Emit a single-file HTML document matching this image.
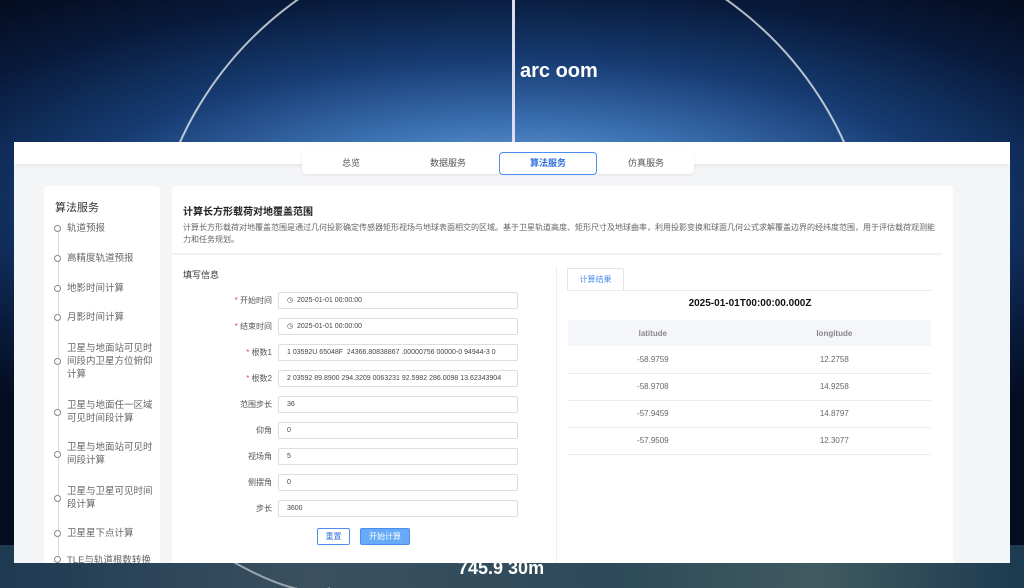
<!DOCTYPE html>
<html><head><meta charset="utf-8"><style>
*{margin:0;padding:0;box-sizing:border-box}
html,body{width:1024px;height:588px;overflow:hidden}
body{position:relative;font-family:"Liberation Sans","Noto Sans CJK SC",sans-serif;background:#0a1a3a}
.wrap{position:absolute;left:0;top:0;width:1024px;height:588px;overflow:hidden}
.bg{position:absolute;left:0;top:0;width:1024px;height:588px;background:radial-gradient(ellipse 800px 260px at 512px 200px,#7fb0e8 0%,#3a6fb0 30%,#163a70 55%,#081a3a 80%,#040c20 100%)}
.bg2{position:absolute;left:0;width:1024px;top:545px;height:43px;background:linear-gradient(90deg,#1e3a52,#3a5060 30%,#2d4a5a 60%,#405a60 80%,#1c3a50)}
.panel{position:absolute;left:14px;top:142px;width:996px;height:421px;background:#f4f5f7;overflow:hidden}
.hdr{position:absolute;left:0;top:0;width:996px;height:22px;background:#fff;box-shadow:0 2px 4px rgba(0,0,0,.05)}
.tabs{position:absolute;left:288px;top:10px;width:392px;height:22px;background:#fff;border-radius:4px;box-shadow:0 1px 3px rgba(0,0,0,.08);font-size:9px;color:#555}
.tabs span{position:absolute;top:4px}
.tabs .act{position:absolute;left:197px;top:0;width:98px;height:23px;border:1px solid #4a8cf0;border-radius:4px;color:#2f6fe0;font-weight:bold;text-align:center;line-height:21px}
.side{position:absolute;left:30px;top:44px;width:116px;height:377px;background:#fff;border-radius:4px 4px 0 0;overflow:hidden}
.side h3{position:absolute;left:11px;top:13px;font-size:11px;font-weight:normal;color:#333}
.vl{position:absolute;left:14px;top:42px;width:1px;height:335px;background:#ddd}
.it{position:absolute;left:23px;font-size:9.5px;color:#666;line-height:13px;width:86px}
.dot{position:absolute;left:10px;width:7px;height:7px;border:1px solid #888;border-radius:50%;background:#fff}
.card{position:absolute;left:158px;top:44px;width:781px;height:377px;background:#fff;border-radius:4px 4px 0 0;overflow:hidden}
.t1{position:absolute;left:11px;top:17px;font-size:10px;font-weight:bold;color:#222}
.d1{position:absolute;left:11px;top:36px;width:752px;font-size:8px;color:#666;line-height:12px}
.sep{position:absolute;left:0;top:67px;width:770px;height:2px;background:#f2f2f2}
.t2{position:absolute;left:11px;top:82px;font-size:9px;color:#333}
.lb{position:absolute;width:100px;text-align:right;font-size:8px;color:#555}
.lb b{color:#e44;font-weight:normal}
.in{position:absolute;left:106px;width:240px;height:17px;border:1px solid #ddd;border-radius:2px;font-size:7px;color:#444;padding-left:8px;line-height:15px;white-space:nowrap;overflow:hidden}
.btn{position:absolute;top:342px;height:17px;font-size:8px;border-radius:2px;text-align:center;line-height:15px}
.vd{position:absolute;left:384px;top:80px;width:1px;height:297px;background:#eee}
.rt{position:absolute;left:395px;top:82px;width:57px;height:23px;border:1px solid #e4e4e4;border-bottom:none;font-size:8px;color:#4a8cf0;text-align:center;line-height:22px;border-radius:2px 2px 0 0;background:#fff}
.rl{position:absolute;left:395px;top:104px;width:364px;height:1px;background:#e8e8e8}
.rh{position:absolute;left:396px;top:112px;width:364px;text-align:center;font-size:10px;font-weight:bold;color:#111}
table{position:absolute;left:396px;top:134px;width:363px;border-collapse:collapse;font-size:8px;color:#666}
th{background:#f5f6f9;height:26px;font-weight:bold;color:#888}
td{height:27px;text-align:center;border-bottom:1px solid #eee}
</style></head><body><div class="wrap">
<div class="bg"></div><div class="bg2"></div>
<svg width="1024" height="588" style="position:absolute;left:0;top:0"><path d="M160 200 A362 350 0 0 1 864 200" fill="none" stroke="rgba(255,255,255,.7)" stroke-width="2"/><path d="M230 560 Q300 600 330 588" fill="none" stroke="rgba(255,255,255,.5)" stroke-width="2"/></svg>
<div style="position:absolute;left:512px;top:0;width:3px;height:142px;background:#dde"></div>
<div style="position:absolute;left:520px;top:60px;color:#fff;font-size:20px;font-weight:bold">arc oom</div>
<div style="position:absolute;left:458px;top:558px;color:#fff;font-size:18px;line-height:20px;font-weight:bold">745.9 30m</div>
<div class="panel">
<div class="hdr"></div>
<div class="tabs"><span style="left:40px">总览</span><span style="left:128px">数据服务</span><div class="act">算法服务</div><span style="left:326px">仿真服务</span></div>
<div class="side"><h3>算法服务</h3><div class="vl"></div>
<div class="dot" style="top:39px"></div><div class="it" style="top:36px">轨道预报</div>
<div class="dot" style="top:69px"></div><div class="it" style="top:66px">高精度轨道预报</div>
<div class="dot" style="top:99px"></div><div class="it" style="top:96px">地影时间计算</div>
<div class="dot" style="top:128px"></div><div class="it" style="top:125px">月影时间计算</div>
<div class="dot" style="top:172px"></div><div class="it" style="top:156px">卫星与地面站可见时间段内卫星方位俯仰计算</div>
<div class="dot" style="top:223px"></div><div class="it" style="top:213px">卫星与地面任一区域可见时间段计算</div>
<div class="dot" style="top:265px"></div><div class="it" style="top:255px">卫星与地面站可见时间段计算</div>
<div class="dot" style="top:309px"></div><div class="it" style="top:299px">卫星与卫星可见时间段计算</div>
<div class="dot" style="top:344px"></div><div class="it" style="top:341px">卫星星下点计算</div>
<div class="dot" style="top:370px"></div><div class="it" style="top:368px;height:9px;overflow:hidden">TLE与轨道根数转换</div>
</div>
<div class="card">
<div class="t1">计算长方形载荷对地覆盖范围</div>
<div class="d1">计算长方形载荷对地覆盖范围是通过几何投影确定传感器矩形视场与地球表面相交的区域。基于卫星轨道高度、矩形尺寸及地球曲率，利用投影变换和球面几何公式求解覆盖边界的经纬度范围，用于评估载荷观测能力和任务规划。</div>
<div class="sep"></div>
<div class="t2">填写信息</div>
<div class="lb" style="top:109px"><b>*</b> 开始时间</div><div class="in" style="top:106px">◷&nbsp; 2025-01-01 00:00:00</div>
<div class="lb" style="top:135px"><b>*</b> 结束时间</div><div class="in" style="top:132px">◷&nbsp; 2025-01-01 00:00:00</div>
<div class="lb" style="top:161px"><b>*</b> 根数1</div><div class="in" style="top:158px">1 03592U 65048F &nbsp;24366.80838867 .00000756 00000-0 94944-3 0</div>
<div class="lb" style="top:187px"><b>*</b> 根数2</div><div class="in" style="top:184px">2 03592 89.8900 294.3209 0063231 92.5982 286.0098 13.62343904</div>
<div class="lb" style="top:213px">范围步长</div><div class="in" style="top:210px">36</div>
<div class="lb" style="top:239px">仰角</div><div class="in" style="top:236px">0</div>
<div class="lb" style="top:265px">视场角</div><div class="in" style="top:262px">5</div>
<div class="lb" style="top:291px">侧摆角</div><div class="in" style="top:288px">0</div>
<div class="lb" style="top:317px">步长</div><div class="in" style="top:314px">3600</div>
<div class="btn" style="left:145px;width:33px;border:1px solid #4a8cf0;color:#2f6fe0">重置</div>
<div class="btn" style="left:188px;width:50px;background:#66aaf8;border:1px solid #4a8cf0;color:#fff">开始计算</div>
<div class="vd"></div>
<div class="rt">计算结果</div><div class="rl"></div>
<div class="rh">2025-01-01T00:00:00.000Z</div>
<table><tr><th>latitude</th><th>longitude</th></tr>
<tr><td>-58.9759</td><td>12.2758</td></tr>
<tr><td>-58.9708</td><td>14.9258</td></tr>
<tr><td>-57.9459</td><td>14.8797</td></tr>
<tr><td>-57.9509</td><td>12.3077</td></tr></table>
</div>
</div>
</div></body></html>
